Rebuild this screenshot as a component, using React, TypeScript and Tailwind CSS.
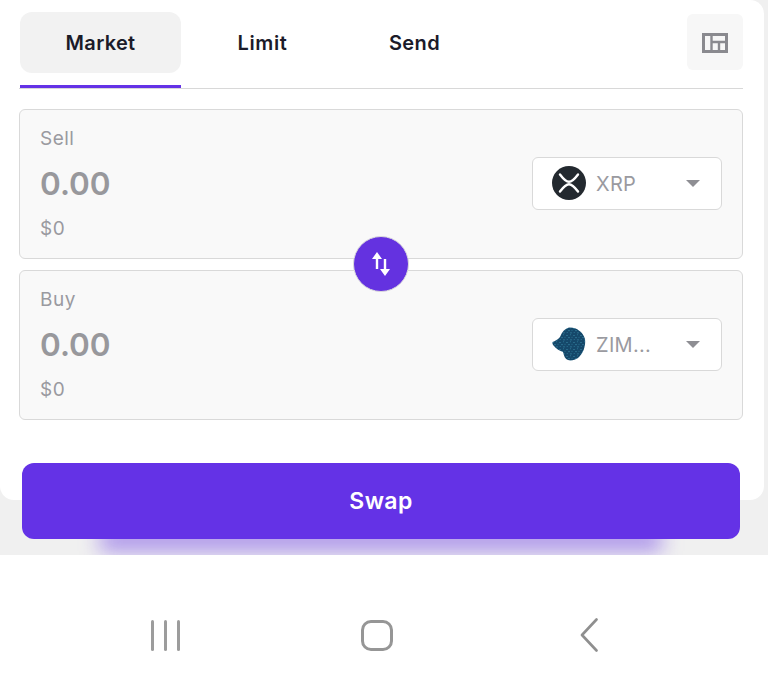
function XrpLogo() {
  return (
    <svg viewBox="0 0 34 34" className="h-[34px] w-[34px] shrink-0">
      <circle cx="17" cy="17" r="17" fill="#23292f" />
      <path
        d="M8 8.500C11 12.500 14 15.800 17 15.800C20 15.800 23 12.500 26 8.500M8 25.500C11 21.500 14 18.200 17 18.200C20 18.200 23 21.500 26 25.500"
        fill="none"
        stroke="#fff"
        strokeWidth="2.400"
        strokeLinecap="round"
      />
    </svg>
  );
}

function ZimLogo() {
  return (
    <svg viewBox="0 0 34 34" className="h-[34px] w-[34px] shrink-0">
      <defs>
        <pattern id="zim-dots" width="7" height="7" patternUnits="userSpaceOnUse">
          <rect width="7" height="7" fill="#15486a" />
          <circle cx="1" cy="1.500" r="0.600" fill="#3f93b0" />
          <circle cx="4.500" cy="0.800" r="0.500" fill="#2d7c9c" />
          <circle cx="3" cy="3.600" r="0.600" fill="#3f93b0" />
          <circle cx="6" cy="3.200" r="0.500" fill="#2d7c9c" />
          <circle cx="1.200" cy="5.600" r="0.500" fill="#2d7c9c" />
          <circle cx="5" cy="5.800" r="0.600" fill="#3f93b0" />
        </pattern>
      </defs>
      <path
        d="M0.500 15C3 14 6 12.500 8 10C10 5 13 1 18 0.500C25 0.500 31 5 33 12C34 19 31 27 26 31C23 33 19 34 16 33C13 32 12 29 11 25C8 24 4 22 2 19C1 18 0 16.500 0.500 15Z"
        fill="url(#zim-dots)"
      />
    </svg>
  );
}

function TokenPanel({ label, token, logo }: { label: string; token: string; logo: React.ReactNode }) {
  return (
    <div className="flex h-[150px] items-center justify-between rounded-[6px] border border-[#d9d9d9] bg-[#f9f9f9] pl-5 pr-5">
      <div className="flex flex-col">
        <span className="text-[19px] leading-[28px] tracking-[0.5px] text-[#9a9aa0]">{label}</span>
        <span className="mt-[9px] text-[31.500px] leading-[44px] font-semibold text-[#98989c]">0.00</span>
        <span className="mt-[9px] text-[19px] leading-[28px] tracking-[0.5px] text-[#9a9aa0]">$0</span>
      </div>
      <div className="mb-[2px] flex h-[53px] w-[190px] items-center rounded-[6px] border border-[#d9d9d9] bg-white pl-[19px] pr-[21px]">
        {logo}
        <span className="mt-[2px] ml-[10px] flex-1 text-[20px] tracking-[0.3px] text-[#9a9aa0]">{token}</span>
        <span className="mt-px h-0 w-0 border-x-[7px] border-t-[7px] border-x-transparent border-t-[#8e8e93]" />
      </div>
    </div>
  );
}

export default function App() {
  return (
    <div className="flex h-[684px] w-[768px] flex-col overflow-hidden bg-white font-['Inter',sans-serif]">
      <div className="h-[555px] bg-[#f0f0f0]">
        <div className="h-[500px] w-[764px] rounded-b-[14px] rounded-tr-[14px] bg-white pl-[19px] pr-[21px] pt-[12px]">
          <div className="flex h-[77px] items-start border-b border-[#d8d8d8] pl-px">
            <div className="relative flex h-[61px] w-[161px] items-center justify-center rounded-[12px] bg-[#f2f2f2] text-[20px] font-semibold tracking-[0.3px] text-[#1b1b29]">
              Market
              <span className="absolute -bottom-[15px] left-0 h-[3px] w-full bg-[#6432e6]" />
            </div>
            <div className="flex h-[61px] w-[163px] items-center justify-center text-[20px] font-semibold tracking-[0.6px] text-[#1b1b29]">
              Limit
            </div>
            <div className="flex h-[61px] w-[141px] items-center justify-center text-[20px] font-semibold tracking-[0.4px] text-[#1b1b29]">
              Send
            </div>
            <div className="mt-[2px] ml-auto flex h-[56px] w-[56px] items-center justify-center rounded-[6px] bg-[#f7f7f7]">
              <svg viewBox="0 0 26 20" className="mt-[2px] h-[20px] w-[26px]" fill="none" stroke="#8a8a8f" strokeWidth="3">
                <rect x="1.500" y="1.500" width="23" height="17" />
                <path d="M9.500 1.500v17M9.500 9h15M17 9v9.500" strokeWidth="2.400" />
              </svg>
            </div>
          </div>

          <div className="relative mt-[20px] flex flex-col gap-[11px]">
            <TokenPanel label="Sell" token="XRP" logo={<XrpLogo />} />
            <TokenPanel label="Buy" token="ZIM..." logo={<ZimLogo />} />
            <div className="absolute left-[334px] top-[127px] flex h-[56px] w-[56px] items-center justify-center rounded-full border border-[#dcdcdc] bg-[#6432e0]">
              <svg viewBox="0 0 20 26" className="h-[26px] w-[20px]" fill="#fff">
                <path d="M6 1 11 8H7.200v10H4.800V8H1z" />
                <path d="M14 25 9 18h3.800V8h2.400v10H19z" />
              </svg>
            </div>
          </div>

          <div className="relative mt-[43px] ml-[3px] w-[718px]">
            <span className="absolute inset-x-[78px] -bottom-[12px] h-[22px] bg-[#6432e6]/50 blur-[10px]" />
            <button className="relative flex h-[76px] w-full items-center justify-center rounded-[12px] bg-[#6432e6] text-[23px] font-semibold tracking-[0.4px] text-white">
              Swap
            </button>
          </div>
        </div>
      </div>

      <div className="relative flex-1 bg-white">
        <div className="mt-[63px] ml-[151px] flex items-center">
          <div className="flex h-[31px] w-[29px] justify-between">
            <span className="w-[3px] rounded-full bg-[#9c9c9c]" />
            <span className="w-[3px] rounded-full bg-[#9c9c9c]" />
            <span className="w-[3px] rounded-full bg-[#9c9c9c]" />
          </div>
          <span className="ml-[181px] h-[31px] w-[32px] rounded-[10px] border-[3px] border-[#969696]" />
          <svg viewBox="0 0 18 34" className="ml-[187px] h-[34px] w-[18px]" fill="none" stroke="#8f8f8f" strokeWidth="2.600" strokeLinecap="round" strokeLinejoin="round">
            <path d="M16.500 1.500 2 17l14.500 15.500" />
          </svg>
        </div>
      </div>
    </div>
  );
}
